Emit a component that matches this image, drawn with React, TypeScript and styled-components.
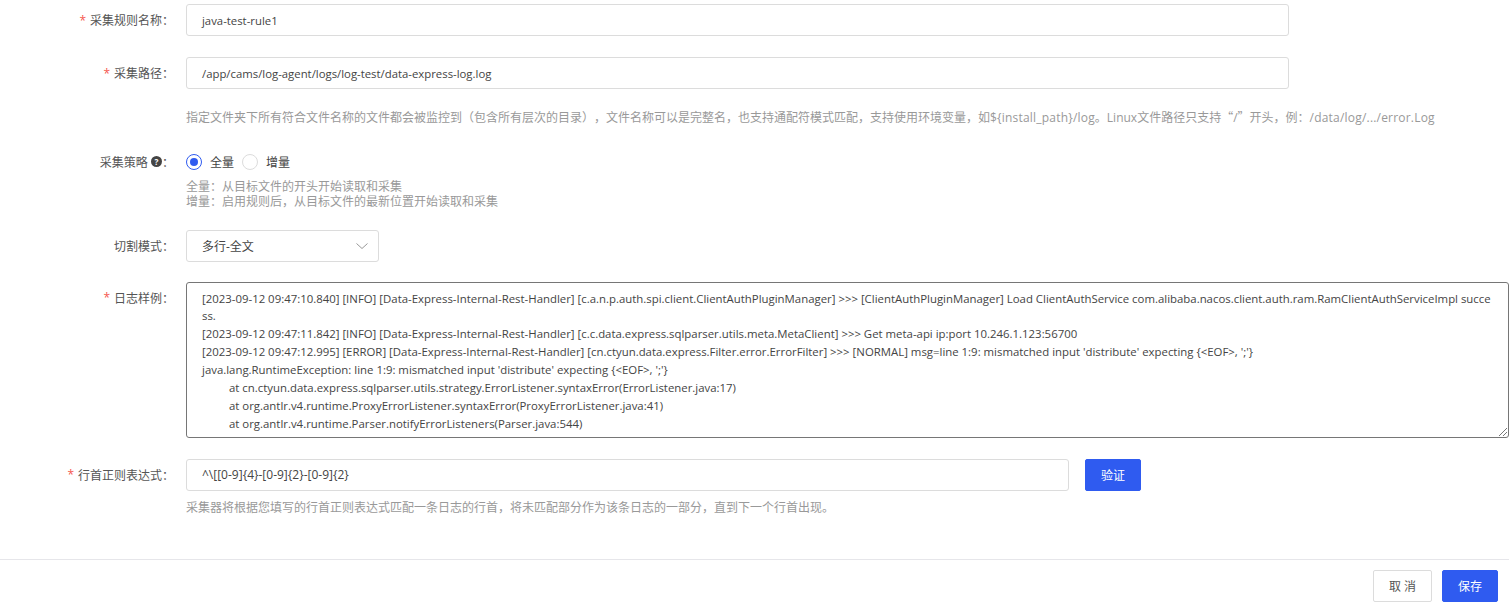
import React from "react";
import styled, { createGlobalStyle } from "styled-components";

const GlobalStyle = createGlobalStyle`
  html, body {
    margin: 0;
    padding: 0;
    background: #fff;
    overflow: hidden;
  }
  body {
    font-family: "Open Sans", "Noto Sans CJK SC", sans-serif;
    font-size: 12px;
    color: #333;
    text-spacing-trim: space-all;
  }
`;

const Page = styled.div`
  width: 1509px;
  height: 604px;
  display: flex;
  flex-direction: column;
  overflow: hidden;
`;

const Form = styled.div`
  flex: 1;
  display: flex;
  flex-direction: column;
  padding-top: 4px;
`;

const Row = styled.div<{ mt?: number }>`
  display: grid;
  grid-template-columns: 186px 1fr;
  margin-top: ${({ mt }) => mt ?? 0}px;
`;

const Label = styled.label<{ compact?: boolean }>`
  padding-right: 12px;
  height: ${({ compact }) => (compact ? 16 : 32)}px;
  display: flex;
  align-items: center;
  justify-content: flex-end;
  color: #555;
  font-size: 12px;
`;

const Star = styled.span`
  color: #f5564e;
  margin-right: 4px;
`;

const Field = styled.div`
  min-width: 0;
`;

const TextInput = styled.div<{ width?: number; latin?: boolean }>`
  box-sizing: border-box;
  width: ${({ width }) => width ?? 1103}px;
  height: 32px;
  border: 1px solid #dcdcdc;
  border-radius: 3px;
  padding: 0 15px;
  display: flex;
  align-items: center;
  color: #444;
  font-size: ${({ latin }) => (latin ? 11.35 : 12)}px;
`;

const Hint = styled.div<{ mt?: number }>`
  color: #999;
  line-height: 15.5px;
  margin-top: ${({ mt }) => mt ?? 0}px;
`;

const HintLatin = styled.span`
  letter-spacing: 0.2px;
`;

const Quote = styled.span`
  font-family: "Noto Sans CJK SC", sans-serif;
`;

const RadioLine = styled.div`
  display: flex;
  align-items: center;
  height: 16px;
`;

const RadioDot = styled.span<{ checked?: boolean }>`
  box-sizing: border-box;
  width: 16px;
  height: 16px;
  border-radius: 50%;
  border: 1px solid ${({ checked }) => (checked ? "#2f5bf0" : "#dcdcdc")};
  display: flex;
  align-items: center;
  justify-content: center;
  &::after {
    content: "";
    display: ${({ checked }) => (checked ? "block" : "none")};
    width: 8px;
    height: 8px;
    border-radius: 50%;
    background: #2f5bf0;
  }
`;

const RadioText = styled.span`
  margin: 0 8px;
  color: #444;
`;

const Select = styled(TextInput)`
  justify-content: space-between;
  padding-right: 9px;
`;

const LogBox = styled.div`
  box-sizing: border-box;
  position: relative;
  width: 1323px;
  height: 156px;
  border: 1px solid #767676;
  border-radius: 3px;
  padding: 7px 15px;
  color: #444;
  font-size: 11.4px;
  line-height: 17.9px;
  overflow: hidden;
`;

const LogLine = styled.div<{ indent?: boolean }>`
  padding-left: ${({ indent }) => (indent ? 27 : 0)}px;
  word-break: break-all;
`;

const Grip = styled.svg`
  position: absolute;
  right: 0;
  bottom: 0;
`;

const RegexRow = styled.div`
  display: flex;
  gap: 16px;
`;

const Button = styled.button<{ primary?: boolean; width: number }>`
  box-sizing: border-box;
  width: ${({ width }) => width}px;
  height: 32px;
  border-radius: 2px;
  border: 1px solid ${({ primary }) => (primary ? "#2f5bf0" : "#dcdcdc")};
  background: ${({ primary }) => (primary ? "#2f5bf0" : "#fff")};
  color: ${({ primary }) => (primary ? "#fff" : "#555")};
  font: inherit;
  padding: 0;
`;

const Footer = styled.div`
  box-sizing: border-box;
  height: 45px;
  flex: none;
  border-top: 1px solid #e6e6ea;
  display: flex;
  justify-content: flex-end;
  align-items: flex-start;
  gap: 10px;
  padding: 10px 11px 0 0;
`;

export default function App() {
  return (
    <Page>
      <GlobalStyle />
      <Form>
        <Row>
          <Label>
            <Star>*</Star>采集规则名称：
          </Label>
          <Field>
            <TextInput latin>java-test-rule1</TextInput>
          </Field>
        </Row>
        <Row mt={21}>
          <Label>
            <Star>*</Star>采集路径：
          </Label>
          <Field>
            <TextInput latin>/app/cams/log-agent/logs/log-test/data-express-log.log</TextInput>
            <Hint mt={20}>
              指定文件夹下所有符合文件名称的文件都会被监控到（包含所有层次的目录），文件名称可以是完整名，也支持通配符模式匹配，支持使用环境变量，如<HintLatin>{"${install_path}/log"}</HintLatin>。Linux文件路径只支持<Quote>“</Quote>/<Quote>”</Quote>开头，例：<HintLatin>/data/log/.../error.Log</HintLatin>
            </Hint>
          </Field>
        </Row>
        <Row mt={28}>
          <Label as="div" compact>
            采集策略&nbsp;
            <svg width="11" height="11" viewBox="0 0 16 16">
              <circle cx="8" cy="8" r="8" fill="#444" />
              <text x="8" y="12.5" fontSize="12" fontWeight="700" textAnchor="middle" fill="#fff">?</text>
            </svg>
            ：
          </Label>
          <Field>
            <RadioLine>
              <RadioDot checked />
              <RadioText>全量</RadioText>
              <RadioDot />
              <RadioText>增量</RadioText>
            </RadioLine>
            <Hint mt={9}>全量：从目标文件的开头开始读取和采集</Hint>
            <Hint>增量：启用规则后，从目标文件的最新位置开始读取和采集</Hint>
          </Field>
        </Row>
        <Row mt={20}>
          <Label>切割模式：</Label>
          <Field>
            <Select width={193}>
              多行-全文
              <svg width="14" height="14" viewBox="0 0 14 14" fill="none">
                <path d="M1.5 4.5 7 9.5l5.5-5" stroke="#999" strokeWidth="1" />
              </svg>
            </Select>
          </Field>
        </Row>
        <Row mt={20}>
          <Label>
            <Star>*</Star>日志样例：
          </Label>
          <Field>
            <LogBox>
              <LogLine>[2023-09-12 09:47:10.840] [INFO] [Data-Express-Internal-Rest-Handler] [c.a.n.p.auth.spi.client.ClientAuthPluginManager] &gt;&gt;&gt; [ClientAuthPluginManager] Load ClientAuthService com.alibaba.nacos.client.auth.ram.RamClientAuthServiceImpl success.</LogLine>
              <LogLine>[2023-09-12 09:47:11.842] [INFO] [Data-Express-Internal-Rest-Handler] [c.c.data.express.sqlparser.utils.meta.MetaClient] &gt;&gt;&gt; Get meta-api ip:port 10.246.1.123:56700</LogLine>
              <LogLine>[2023-09-12 09:47:12.995] [ERROR] [Data-Express-Internal-Rest-Handler] [cn.ctyun.data.express.Filter.error.ErrorFilter] &gt;&gt;&gt; [NORMAL] msg=line 1:9: mismatched input 'distribute' expecting {'{'}&lt;EOF&gt;, ';'{'}'}</LogLine>
              <LogLine>java.lang.RuntimeException: line 1:9: mismatched input 'distribute' expecting {'{'}&lt;EOF&gt;, ';'{'}'}</LogLine>
              <LogLine indent>at cn.ctyun.data.express.sqlparser.utils.strategy.ErrorListener.syntaxError(ErrorListener.java:17)</LogLine>
              <LogLine indent>at org.antlr.v4.runtime.ProxyErrorListener.syntaxError(ProxyErrorListener.java:41)</LogLine>
              <LogLine indent>at org.antlr.v4.runtime.Parser.notifyErrorListeners(Parser.java:544)</LogLine>
              <Grip width="10" height="10" viewBox="0 0 10 10">
                <path d="M9 1 1 9M9 5 5 9" stroke="#777" strokeWidth="1" fill="none" />
              </Grip>
            </LogBox>
          </Field>
        </Row>
        <Row mt={21}>
          <Label>
            <Star>*</Star>行首正则表达式：
          </Label>
          <Field>
            <RegexRow>
              <TextInput width={883}>^\[[0-9]{"{4}"}-[0-9]{"{2}"}-[0-9]{"{2}"}</TextInput>
              <Button primary width={56}>验证</Button>
            </RegexRow>
            <Hint mt={9}>采集器将根据您填写的行首正则表达式匹配一条日志的行首，将未匹配部分作为该条日志的一部分，直到下一个行首出现。</Hint>
          </Field>
        </Row>
      </Form>
      <Footer>
        <Button width={59}>取 消</Button>
        <Button primary width={56}>保存</Button>
      </Footer>
    </Page>
  );
}
